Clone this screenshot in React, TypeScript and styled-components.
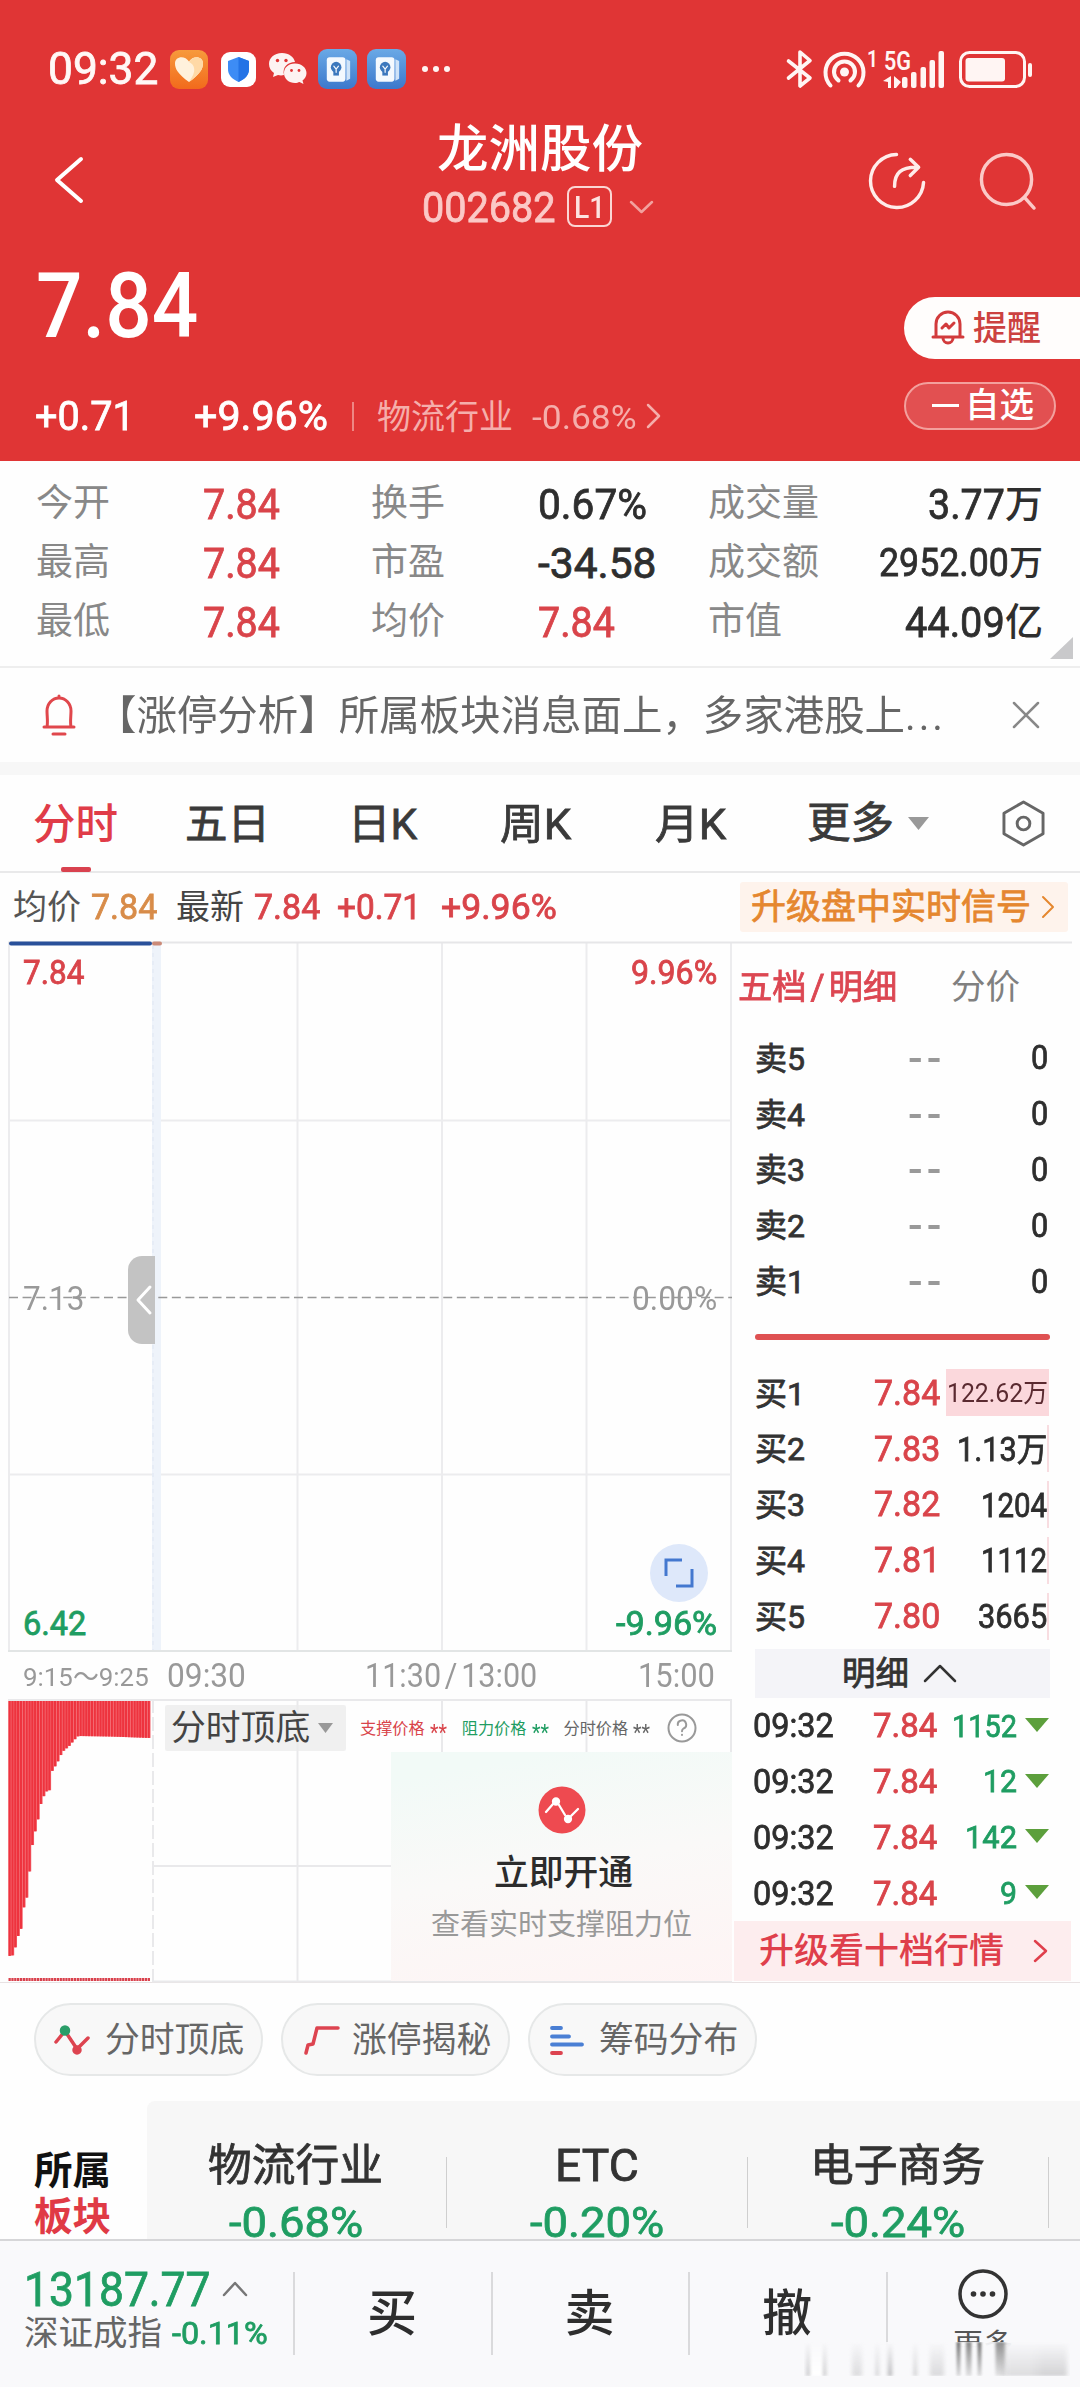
import React, { useLayoutEffect, useRef, useState } from 'react';
import styled, { createGlobalStyle } from 'styled-components';

const Global = createGlobalStyle`
  * { box-sizing: border-box; }
  body { margin: 0; background: #fefefe; }
`;

const RED = '#e03535';
const UP = '#d9444a';
const DOWN = '#1f9d62';

const Page = styled.div`
  width: 1080px;
  height: 2387px;
  overflow: hidden;
  display: flex;
  flex-direction: column;
  background: #fefefe;
  font-family: Roboto, 'Noto Sans CJK SC', sans-serif;
`;

const TextBox = styled.span<{ $w?: number; $ml: number; $size: number; $color: string; $weight: number; $spacing: number }>`
  display: block;
  flex: none;
  width: ${(p) => (p.$w ? `${p.$w}px` : 'auto')};
  margin-left: ${(p) => p.$ml}px;
  padding-top: 2px;
  font-size: ${(p) => p.$size}px;
  letter-spacing: ${(p) => p.$spacing}px;
  line-height: 1.2;
  color: ${(p) => p.$color};
  font-weight: ${(p) => (p.$weight === 450 ? 400 : p.$weight)};
  -webkit-text-stroke: ${(p) => (p.$weight === 450 ? '0.8px currentColor' : '0')};
  white-space: nowrap;
`;

const TextInner = styled.span`
  display: inline-block;
  transform-origin: left center;
`;

const Slash = styled.span`
  margin: 0 4px;
`;

type TextProps = {
  children: React.ReactNode;
  w?: number;
  ml?: number;
  size: number;
  color?: string;
  weight?: number;
  spacing?: number;
};

/* Text condensed or widened to a set advance width. */
function Text({ children, w, ml = 0, size, color = '#333', weight = 400, spacing = 0 }: TextProps) {
  const ref = useRef<HTMLSpanElement>(null);
  const [scale, setScale] = useState(1);
  useLayoutEffect(() => {
    if (w && ref.current) setScale(w / ref.current.offsetWidth);
  }, [w, children]);
  return (
    <TextBox $w={w} $ml={ml} $size={size} $color={color} $weight={weight} $spacing={spacing}>
      <TextInner ref={ref} style={{ transform: `scaleX(${scale})` }}>
        {children}
      </TextInner>
    </TextBox>
  );
}

const Icon = styled.svg<{ $ml?: number }>`
  display: block;
  flex: none;
  margin-left: ${(p) => p.$ml ?? 0}px;
  fill: none;
  overflow: visible;
  stroke-linecap: round;
  stroke-linejoin: round;
`;

/* ---------- header ---------- */

const Header = styled.header`
  height: 461px;
  flex: none;
  background: ${RED};
  display: flex;
  flex-direction: column;
`;

const StatusBar = styled.div`
  height: 114px;
  padding: 24px 48px 0 48px;
  display: flex;
  align-items: center;
  justify-content: space-between;
`;

const Row = styled.div`
  display: flex;
  align-items: center;
`;

const AppBadge = styled.span<{ $ml: number; $w: number; $h: number; $bg: string }>`
  width: ${(p) => p.$w}px;
  height: ${(p) => p.$h}px;
  margin-left: ${(p) => p.$ml}px;
  border-radius: 9px;
  background: ${(p) => p.$bg};
  display: flex;
  align-items: center;
  justify-content: center;
`;

const TitleBar = styled.div`
  height: 126px;
  display: grid;
  grid-template-columns: 300px 480px 300px;
`;

const BackSlot = styled.div`
  padding: 43px 0 0 55px;
`;

const TitleStack = styled.div`
  display: flex;
  flex-direction: column;
  align-items: center;
  padding-top: 3px;
`;

const CodeRow = styled(Row)`
  height: 44px;
  margin-top: 4px;
  margin-left: -5px;
`;

const LevelBadge = styled.span`
  width: 45px;
  height: 41px;
  margin-left: 11px;
  border: 2.5px solid #fbd6d4;
  border-radius: 8px;
  display: flex;
  align-items: center;
  justify-content: center;
`;

const ActionSlot = styled.div`
  display: flex;
  padding: 37px 0 0 88px;
`;

const Quote = styled.div`
  display: flex;
  justify-content: space-between;
  flex: 1;
`;

const QuoteMain = styled.div`
  padding: 11px 0 0 35px;
`;

const PriceLine = styled(Row)`
  height: 110px;
`;

const ChangeLine = styled(Row)`
  height: 60px;
  margin-top: 25px;
`;

const Divider = styled.span<{ $ml: number; $h: number; $color: string }>`
  width: 2px;
  flex: none;
  height: ${(p) => p.$h}px;
  margin-left: ${(p) => p.$ml}px;
  background: ${(p) => p.$color};
`;

const QuoteActions = styled.div`
  width: 176px;
  padding-top: 57px;
`;

const AlertPill = styled(Row)`
  height: 62px;
  background: #fffdfc;
  border-radius: 31px 0 0 31px;
  padding: 0 0 2px 27px;
`;

const WatchPill = styled(Row)`
  width: 152px;
  height: 48px;
  margin-top: 23px;
  padding: 0 0 2px 26px;
  border: 2px solid #f3a09d;
  border-radius: 24px;
  background: #e25051;
`;

const MinusMark = styled.span`
  width: 27px;
  height: 3px;
  background: #fff;
`;

/* ---------- statistics and notice ---------- */

const Stats = styled.section`
  position: relative;
  height: 207px;
  flex: none;
  padding: 13px 0 0 36px;
  border-bottom: 2px solid #eeeeee;
  display: grid;
  grid-template-columns: 167px 168px 167px 170px 112px 223px;
  grid-auto-rows: 59px;
  align-items: center;
`;

const Right = styled.div`
  display: flex;
  justify-content: flex-end;
  align-items: center;
`;

const Corner = styled.span`
  position: absolute;
  right: 7px;
  bottom: 7px;
  border-left: 23px solid transparent;
  border-bottom: 22px solid #c9c9cb;
`;

const Notice = styled(Row)`
  height: 94px;
  flex: none;
  padding-left: 42px;
`;

const Gap = styled.div`
  height: 13px;
  flex: none;
  background: #f7f7f7;
`;

/* ---------- tabs ---------- */

const Tabs = styled.nav`
  height: 98px;
  flex: none;
  display: flex;
  padding-left: 33px;
  border-bottom: 2px solid #e9e9ea;
`;

const Tab = styled.div<{ $w: number }>`
  width: ${(p) => p.$w}px;
  height: 96px;
  display: flex;
  align-items: center;
`;

const ActiveTab = styled.div`
  width: 152px;
  height: 96px;
  padding-top: 22px;
`;

const Underline = styled.div`
  width: 30px;
  height: 5px;
  border-radius: 2px;
  margin: 17px 0 0 28px;
  background: #d9424f;
`;

const InfoRow = styled(Row)`
  height: 69px;
  flex: none;
  padding: 0 0 2px 13px;
`;

const SignalPromo = styled(Row)`
  margin-left: auto;
  margin-right: 12px;
  width: 328px;
  height: 50px;
  padding-left: 11px;
  background: #fef3ec;
  border-radius: 3px;
`;

/* ---------- chart and order book ---------- */

const Market = styled.section`
  height: 1040px;
  flex: none;
  display: grid;
  grid-template-columns: 732px 348px;
`;

const PriceChart = styled.div`
  position: relative;
  height: 709px;
`;

const Plot = styled.svg`
  position: absolute;
  inset: 0;
  width: 100%;
  height: 100%;
  overflow: visible;
`;

const Scale = styled.div`
  height: 709px;
  padding: 10px 15px 7px 23px;
  display: flex;
  flex-direction: column;
  justify-content: space-between;
`;

const ScaleRow = styled.div`
  display: flex;
  justify-content: space-between;
`;

const Handle = styled.div`
  position: absolute;
  left: 128px;
  top: 314px;
  width: 27px;
  height: 88px;
  border-radius: 14px 0 0 14px;
  background: #c3c3c3;
  display: flex;
  align-items: center;
  justify-content: center;
`;

const ExpandButton = styled.div`
  position: absolute;
  left: 650px;
  top: 602px;
  width: 58px;
  height: 58px;
  border-radius: 50%;
  background: #dee8fa;
  display: flex;
  align-items: center;
  justify-content: center;
`;

const Axis = styled(Row)`
  height: 48px;
  padding: 1px 0 0 23px;
`;

const SubChart = styled.div`
  position: relative;
  height: 283px;
  padding-top: 6px;
`;

const Legend = styled(Row)`
  position: relative;
  height: 46px;
  padding-left: 165px;
`;

const Stars = styled.span`
  padding-top: 8px;
`;

const Selector = styled(Row)`
  width: 181px;
  height: 46px;
  padding-left: 6px;
  background: rgba(235, 235, 235, 0.75);
  border-radius: 2px;
`;

const OpenCard = styled.div`
  position: absolute;
  left: 391px;
  top: 53px;
  width: 341px;
  height: 229px;
  padding-top: 34px;
  background: linear-gradient(170deg, #f2faf7 10%, #faf9f8 50%, #fef4f4 100%);
  display: flex;
  flex-direction: column;
  align-items: center;
`;

const OpenTitle = styled.div`
  margin: 17px 0 11px;
`;

const Book = styled.div`
  display: flex;
  flex-direction: column;
`;

const BookTabs = styled(Row)`
  height: 89px;
  padding-left: 6px;
`;

const BookRow = styled.div`
  height: 55.8px;
  margin: 0 31px 0 23px;
  padding-bottom: 2px;
  display: grid;
  grid-template-columns: 119px 66px 109px;
  align-items: center;
`;

const Volume = styled.div<{ $full?: boolean; $edge?: boolean }>`
  height: 47px;
  display: flex;
  align-items: center;
  justify-content: flex-end;
  margin-left: ${(p) => (p.$full ? 6 : 0)}px;
  background: ${(p) => (p.$full ? '#fbd8dc' : 'none')};
  border-right: ${(p) => (p.$edge ? '2px solid #f8dde1' : '1px solid transparent')};
`;

const Balance = styled.div`
  height: 6px;
  margin: 24px 30px 26px 23px;
  border-radius: 3px;
  background: #df5152;
`;

const DetailBar = styled(Row)`
  height: 49px;
  margin: 4px 30px 0 23px;
  padding-left: 87px;
  background: #f4f4f8;
`;

const TradeRow = styled.div`
  height: 55.8px;
  margin: 0 31px 0 21px;
  padding-bottom: 2px;
  display: grid;
  grid-template-columns: 120px 66px 78px 32px;
  align-items: center;
`;

const LevelPromo = styled(Row)`
  height: 60px;
  margin-left: 2px;
  width: 337px;
  padding-left: 25px;
  background: #fdedee;
`;

/* ---------- tools, sectors, bottom bar ---------- */

const Tools = styled.section`
  height: 119px;
  flex: none;
  padding: 20px 0 0 34px;
  border-top: 1px solid #e8e2e3;
  display: flex;
  gap: 18px;
`;

const Tool = styled.div`
  width: 229px;
  height: 73px;
  padding-left: 18px;
  border-radius: 37px;
  border: 2px solid #e6e8e8;
  background: #f8f8f8;
  display: flex;
  align-items: center;
`;

const Sectors = styled.section`
  height: 138px;
  flex: none;
  display: flex;
`;

const SectorTitle = styled.div`
  width: 147px;
  padding: 45px 0 0 34px;
`;

const TightLine = styled.div`
  height: 46px;
`;

const SectorList = styled.div`
  flex: 1;
  display: flex;
  background: #f7f7f7;
  border-radius: 8px 0 0 0;
`;

const Sector = styled.div`
  width: 301px;
  padding: 37px 4px 0 0;
  position: relative;
  display: flex;
  flex-direction: column;
  align-items: center;
  gap: 2px;
  &::after {
    content: '';
    position: absolute;
    right: 1px;
    top: 56px;
    width: 1.5px;
    height: 71px;
    background: #cfcfcf;
  }
`;

const BottomBar = styled.footer`
  height: 148px;
  flex: none;
  border-top: 2px solid #d6d6d8;
  background: #f9f9fb;
  display: grid;
  grid-template-columns: 293px 198px 197px 198px 194px;
`;

const IndexCell = styled.div`
  padding: 18px 0 0 24px;
`;

const IndexName = styled(Row)`
  margin-top: -8px;
`;

const TradeCell = styled.div`
  position: relative;
  display: flex;
  justify-content: center;
  padding-top: 41px;
  &::before {
    content: '';
    position: absolute;
    left: 0;
    top: 31px;
    width: 1.5px;
    height: 83px;
    background: #dadadc;
  }
`;

const MoreCell = styled(TradeCell)`
  flex-direction: column;
  align-items: center;
  justify-content: flex-start;
  gap: 6px;
  padding-top: 28px;
`;

/* The strip below the toolbar icons, with its fading vertical streaks. */
const FadeStrip = styled.div`
  position: absolute;
  left: -90px;
  top: 101px;
  width: 284px;
  height: 45px;
  background: linear-gradient(180deg, rgba(249, 249, 251, 0.9) 0, #f9f9fb 6px);
`;

const Streaks = styled.div`
  width: 266px;
  height: 34px;
  margin: 0 0 0 8px;
  filter: blur(1.5px);
  background: linear-gradient(
    90deg,
    transparent 0, #c4c4c6 5px, #fff 7px 18px, #c4c4c6 20px, transparent 24px 46px, #dcdcde 50px 56px,
    transparent 60px 70px, #d4d4d6 73px, transparent 77px 82px, #b4b4b6 86px, transparent 90px 108px,
    #d0d0d2 111px, transparent 115px 124px, #dadadc 128px 138px, transparent 142px 196px,
    #dcdcde 204px 226px, #d2d2d4 240px 260px, transparent 266px
  );
  mask-image: linear-gradient(180deg, transparent, #000);
`;

const LabelStreaks = styled.div`
  width: 58px;
  height: 34px;
  margin: -34px 0 0 158px;
  filter: blur(1px);
  background: linear-gradient(
    90deg,
    transparent 2px, #777 3px 6px, transparent 7px 11px, #888 13px 17px,
    transparent 18px 23px, #777 24px 27px, transparent 28px 40px, #8f8f8f 43px 49px, transparent 53px
  );
  mask-image: linear-gradient(180deg, #000, rgba(0, 0, 0, 0.2));
`;

const Phone = {
  heart: (
    <Icon width="30" height="28" viewBox="0 0 30 28">
      <path d="M15 27C4 19 1 14 1 8.500C1 1 11 0 15 6.500C19 0 29 1 29 8.500C29 14 26 19 15 27Z" fill="#fff1dc" />
      <path d="M15 7C19 0 29 1 29 8.500C29 14 26 19 15 27C23 16 21 10 15 7Z" fill="#ffd9a6" />
    </Icon>
  ),
  shield: (
    <Icon width="23" height="25" viewBox="0 0 23 25">
      <path d="M11.500 0L22 4V12C22 18 18 22 11.500 25C5 22 1 18 1 12V4Z" fill="#3d8cf5" />
      <path d="M11.500 0L22 4V12C22 18 18 22 11.500 25Z" fill="#2373e6" />
    </Icon>
  ),
  card: (
    <Icon width="28" height="27" viewBox="0 0 30 28">
      <path d="M24 3L28 5V24L24 26" fill="#cfe3f8" />
      <rect x="3" y="1" width="20" height="26" rx="3" fill="#f4f9fe" />
      <circle cx="13" cy="11.500" r="5.700" fill="#3c78bd" />
      <path d="M10 14H16V20.500H10Z" fill="#3c78bd" />
      <path d="M10.500 10.500L13 13.500L15.500 10.500M13 13.500V17" stroke="#f4f9fe" strokeWidth="1.300" />
    </Icon>
  ),
};

const WeChat = () => (
  <Icon $ml={12} width="39" height="34" viewBox="0 0 39 34">
    <path d="M14 1C6 1 1 6 1 12C1 16 3 19 6 21L5 25L10 23C12 23.500 14 23.500 16 23C14 15 20 10 27 10C26 5 21 1 14 1Z" fill="#fdf3f2" />
    <path d="M27 11.500C20 11.500 16 16 16 21C16 27 21 31 27 31C29 31 30 30.500 31.500 30L35.500 32L34.500 28.500C37 27 38.500 24 38.500 21C38.500 16 34 11.500 27 11.500Z" fill="#fdf3f2" />
    <g fill={RED}>
      <circle cx="9.500" cy="8.500" r="1.700" />
      <circle cx="18" cy="8.500" r="1.700" />
      <circle cx="23.500" cy="18.500" r="1.400" />
      <circle cx="31" cy="18.500" r="1.400" />
    </g>
  </Icon>
);

const StatusIcons = () => (
  <Icon width="246" height="40" viewBox="787 48 246 40" stroke="#fff5f3">
    <path d="M789.500 60L811 77L801 85V51L811 59.500L789.500 77" strokeWidth="3.600" />
    <circle cx="845.500" cy="71" r="4.500" fill="#fff5f3" stroke="none" />
    <path d="M839.500 79.500A10.500 10.500 0 1 1 851.500 79.500" strokeWidth="4" />
    <path d="M831.500 84.500A19 19 0 1 1 859.500 84.500" strokeWidth="4" />
    <g fill="#fff5f3" stroke="none">
      <path d="M884 80L892 75V87H889V81ZM895 75L902 81L897 87H895Z" />
      <rect x="903" y="76" width="5.500" height="11" rx="2" />
      <rect x="912" y="71" width="5.500" height="16" rx="2" />
      <rect x="921.500" y="66" width="5.500" height="21" rx="2" />
      <rect x="930.500" y="59" width="5.500" height="28" rx="2" />
      <rect x="939.500" y="50" width="5.500" height="37" rx="2" />
      <rect x="966.500" y="57" width="39.500" height="23.500" rx="3" />
      <rect x="1029" y="62" width="4" height="14" rx="2" />
    </g>
    <rect x="961.500" y="51.500" width="64" height="34" rx="9" strokeWidth="3" />
    <g fill="#fff5f3" stroke="none" fontFamily="Roboto, sans-serif" fontWeight="600">
      <text x="868" y="66" fontSize="23" textLength="11" lengthAdjust="spacingAndGlyphs">1</text>
      <text x="885" y="69" fontSize="25.500" textLength="27" lengthAdjust="spacingAndGlyphs">5G</text>
    </g>
  </Icon>
);

const Chevron = ({ w, h, ml, color, dir, sw = 2.5 }: { w: number; h: number; ml: number; color: string; dir: 'left' | 'right' | 'up' | 'down'; sw?: number }) => {
  const d = {
    left: `M${w - 2} 2L2 ${h / 2}L${w - 2} ${h - 2}`,
    right: `M2 2L${w - 2} ${h / 2}L2 ${h - 2}`,
    up: `M2 ${h - 2}L${w / 2} 2L${w - 2} ${h - 2}`,
    down: `M2 2L${w / 2} ${h - 2}L${w - 2} 2`,
  }[dir];
  return (
    <Icon $ml={ml} width={w} height={h} stroke={color} strokeWidth={sw}>
      <path d={d} />
    </Icon>
  );
};

const Caret = ({ w, h, ml, color }: { w: number; h: number; ml: number; color: string }) => (
  <Icon $ml={ml} width={w} height={h}>
    <path d={`M0 0H${w}L${w / 2} ${h}Z`} fill={color} />
  </Icon>
);

/* Lower envelope of the opening auction volume, as [x, y] points. */
const envelope: [number, number][] = [
  [9, 1956], [14, 1955], [16, 1942], [19, 1933], [22.500, 1925], [23.500, 1908], [27, 1896], [30, 1865],
  [33, 1838], [37, 1825], [40, 1806], [44, 1795], [47, 1790.500], [51, 1790], [52, 1771], [57, 1763],
  [62, 1752], [69, 1746], [74, 1740], [78, 1736], [110, 1736.500], [151, 1738],
];

const envelopeAt = (x: number) => {
  for (let i = 1; i < envelope.length; i++) {
    const [x0, y0] = envelope[i - 1];
    const [x1, y1] = envelope[i];
    if (x <= x1) return y0 + ((x - x0) / (x1 - x0)) * (y1 - y0);
  }
  return 1738;
};

const PITCH = 2.84;
const bars = Array.from({ length: 50 }, (_, i) => {
  const x = 8.5 + i * PITCH;
  return { x, y: envelopeAt(Math.max(x + 1, 9)) };
});

const stats: [string, string, number, string][][] = [
  [['今开', '7.84', 77, UP], ['换手', '0.67%', 109, '#2e2e2e'], ['成交量', '3.77', 77, '#2e2e2e']],
  [['最高', '7.84', 77, UP], ['市盈', '-34.58', 119, '#2e2e2e'], ['成交额', '2952.00', 130, '#2e2e2e']],
  [['最低', '7.84', 77, UP], ['均价', '7.84', 77, UP], ['市值', '44.09', 100, '#2e2e2e']],
];
const units = ['万', '万', '亿'];

const buys: [string, string, string, number, number][] = [
  ['1', '7.84', '122.62万', 101, 26],
  ['2', '7.83', '1.13万', 90, 33],
  ['3', '7.82', '1204', 66, 33],
  ['4', '7.81', '1112', 66, 33],
  ['5', '7.80', '3665', 69, 33],
];

const trades: [string, number][] = [['1152', 65], ['12', 34], ['142', 52], ['9', 17]];

const sectors: [string, number, string][] = [
  ['物流行业', 175, '-0.68%'],
  ['ETC', 84, '-0.20%'],
  ['电子商务', 175, '-0.24%'],
];

export default function App() {
  return (
    <Page>
      <Global />
      <Header>
        <StatusBar>
          <Row>
            <Text size={43.5} w={110} color="#fff8f6" weight={450}>09:32</Text>
            <AppBadge $ml={12} $w={38} $h={39} $bg="linear-gradient(#f79a3c, #f26a1c)">{Phone.heart}</AppBadge>
            <AppBadge $ml={13} $w={35} $h={35} $bg="#fff">{Phone.shield}</AppBadge>
            <WeChat />
            <AppBadge $ml={11} $w={39} $h={40} $bg="linear-gradient(#6aa9e6, #3c78cc)">{Phone.card}</AppBadge>
            <AppBadge $ml={10} $w={39} $h={40} $bg="linear-gradient(#6aa9e6, #3c78cc)">{Phone.card}</AppBadge>
            <Icon $ml={15} width="30" height="8">
              <g fill="#fff5f3"><circle cx="4" cy="4" r="3" /><circle cx="15" cy="4" r="3" /><circle cx="26" cy="4" r="3" /></g>
            </Icon>
          </Row>
          <StatusIcons />
        </StatusBar>
        <TitleBar>
          <BackSlot>
            <Chevron w={28} h={46} ml={0} color="#fff" dir="left" sw={4} />
          </BackSlot>
          <TitleStack>
            <Text size={51.5} color="#fff" weight={500}>龙洲股份</Text>
            <CodeRow>
              <Text size={42} w={134} color="#fbc9c7" weight={450}>002682</Text>
              <LevelBadge><Text size={31} w={31} color="#fde3e1" weight={500}>L1</Text></LevelBadge>
              <Chevron w={25} h={14} ml={17} color="#f2a19e" dir="down" />
            </CodeRow>
          </TitleStack>
          <ActionSlot>
            <Icon width="59" height="59" viewBox="0 0 60 60" stroke="#ffecea" strokeWidth="3.500">
              <path d="M29 3.500A27 27 0 1 0 56.500 32" />
              <path d="M27 36C27 22 34 16.500 49 16.500M43 8.500L51.500 16.500L43 25" />
            </Icon>
            <Icon $ml={51} width="59" height="59" viewBox="0 0 60 60" stroke="#fbc9c7" strokeWidth="3.500">
              <circle cx="29" cy="29" r="25.500" />
              <path d="M47 47L57 58" />
            </Icon>
          </ActionSlot>
        </TitleBar>
        <Quote>
          <QuoteMain>
            <PriceLine><Text size={90} w={162} ml={1} color="#fff" weight={500}>7.84</Text></PriceLine>
            <ChangeLine>
              <Text size={40} w={100} color="#fff" weight={450}>+0.71</Text>
              <Text size={40} w={134} ml={59} color="#fff" weight={450}>+9.96%</Text>
              <Divider $ml={24} $h={29} $color="#ee8784" />
              <Text size={34} ml={23} color="#f5aeab">物流行业</Text>
              <Text size={34} w={105} ml={19} color="#f5aeab">-0.68%</Text>
              <Chevron w={15} h={26} ml={9} color="#f5aeab" dir="right" />
            </ChangeLine>
          </QuoteMain>
          <QuoteActions>
            <AlertPill>
              <Icon width="34" height="36" viewBox="0 0 34 36" stroke="#d23b3c" strokeWidth="3">
                <path d="M2 28H32M5 28V15A12 12 0 0 1 29 15V28M12 29A5 5 0 0 0 22 29M11 19L15 15L18 19L23 14" />
              </Icon>
              <Text size={34} ml={8} color="#cc4140" weight={500}>提醒</Text>
            </AlertPill>
            <WatchPill>
              <MinusMark />
              <Text size={34.5} ml={6} color="#fff" weight={500}>自选</Text>
            </WatchPill>
          </QuoteActions>
        </Quote>
      </Header>

      <Stats>
        {stats.map((line, r) =>
          line.map(([label, value, w, color], c) => (
            <React.Fragment key={label}>
              <Text size={37} color="#888">{label}</Text>
              {c < 2 ? (
                <Text size={42.5} w={w} color={color} weight={450}>{value}</Text>
              ) : (
                <Right>
                  <Text size={r === 1 ? 39 : 42.5} w={w} color={color} weight={450}>{value}</Text>
                  <Text size={r === 1 ? 34 : 38} color={color} weight={500}>{units[r]}</Text>
                </Right>
              )}
            </React.Fragment>
          )),
        )}
        <Corner />
      </Stats>

      <Notice>
        <Icon width="34" height="42" viewBox="0 0 34 42" stroke="#e0474c" strokeWidth="3">
          <path d="M2 33H32M5 33C6 28 5 22 5 17A12 13 0 0 1 29 17C29 22 28 28 29 33M17 4V2M11 40H23" />
        </Icon>
        <Text size={40.5} w={850} ml={20} color="#666">
          【涨停分析】所属板块消息面上，多家港股上<span style={{ letterSpacing: 3 }}>...</span>
        </Text>
        <Icon $ml={66} width="28" height="28" stroke="#888" strokeWidth="2.500">
          <path d="M2 2L26 26M26 2L2 26" />
        </Icon>
      </Notice>
      <Gap />

      <Tabs>
        <ActiveTab>
          <Text size={42.5} color="#e03c48" weight={500}>分时</Text>
          <Underline />
        </ActiveTab>
        <Tab $w={163}><Text size={42.5} color="#3a3a3a" weight={450}>五日</Text></Tab>
        <Tab $w={152}><Text size={42.5} w={69} color="#3a3a3a" weight={450}>日K</Text></Tab>
        <Tab $w={155}><Text size={42.5} w={71} color="#3a3a3a" weight={450}>周K</Text></Tab>
        <Tab $w={152}><Text size={42.5} w={71} color="#3a3a3a" weight={450}>月K</Text></Tab>
        <Tab $w={195}>
          <Text size={43.5} color="#3a3a3a" weight={450}>更多</Text>
          <Caret w={21} h={13} ml={14} color="#999" />
        </Tab>
        <Tab $w={44}>
          <Icon width="43" height="47" viewBox="0 0 44 48" stroke="#666" strokeWidth="3">
            <path d="M22 2L42 13.500V34.500L22 46L2 34.500V13.500Z" />
            <circle cx="22" cy="24" r="6.500" />
          </Icon>
        </Tab>
      </Tabs>

      <InfoRow>
        <Text size={34} color="#555">均价</Text>
        <Text size={35} w={66} ml={10} color="#d88c49" weight={450}>7.84</Text>
        <Text size={34} ml={19} color="#444">最新</Text>
        <Text size={35} w={66} ml={10} color={UP} weight={450}>7.84</Text>
        <Text size={35} w={84} ml={17} color={UP} weight={450}>+0.71</Text>
        <Text size={35} w={116} ml={20} color={UP} weight={450}>+9.96%</Text>
        <SignalPromo>
          <Text size={35} color="#e5872f" weight={450}>升级盘中实时信号</Text>
          <Chevron w={14} h={24} ml={10} color="#e5872f" dir="right" sw={2} />
        </SignalPromo>
      </InfoRow>

      <Market>
        <div>
          <PriceChart>
            <Plot viewBox="0 942 732 709">
              <g stroke="#ececee" strokeWidth="2">
                <path d="M9 942V1651M297.500 942V1651M442 942V1651M586.500 942V1651M731 942V1651" />
                <path d="M9 1120.500H732M9 1474.500H732" />
                <path d="M8 1651H732" stroke="#e2e5e5" />
                <path d="M8 942.500H1072" stroke="#e6e6e8" />
              </g>
              <rect x="152" y="945" width="9" height="705" fill="#eef3fa" />
              <path d="M153 945V1650" stroke="#dfe6f2" strokeWidth="1" strokeDasharray="4 4" />
              <g strokeWidth="4" strokeLinecap="round">
                <path d="M154 943.500H160" stroke="#cb8a78" />
                <path d="M11 943.500H150" stroke="#29509a" />
              </g>
            </Plot>
            <Scale>
              <ScaleRow>
                <Text size={32.5} w={61} color={UP} weight={450}>7.84</Text>
                <Text size={32.5} w={86} color={UP} weight={450}>9.96%</Text>
              </ScaleRow>
              <ScaleRow>
                <Text size={32.5} w={61} color="#999">7.13</Text>
                <Text size={32.5} w={85} color="#999">0.00%</Text>
              </ScaleRow>
              <ScaleRow>
                <Text size={32.5} w={63} color={DOWN} weight={450}>6.42</Text>
                <Text size={32.5} w={101} color={DOWN} weight={450}>-9.96%</Text>
              </ScaleRow>
            </Scale>
            <Plot viewBox="0 942 732 709">
              <path d="M9 1297.500H732" stroke="#999" strokeWidth="1.500" strokeDasharray="9 4.570" />
            </Plot>
            <Handle><Chevron w={16} h={30} ml={4} color="#fff" dir="left" sw={3} /></Handle>
            <ExpandButton>
              <Icon width="30" height="30" stroke="#4478cf" strokeWidth="3">
                <path d="M2 18V2H18M28 11V28H12" strokeLinecap="butt" strokeLinejoin="miter" />
              </Icon>
            </ExpandButton>
          </PriceChart>
          <Axis>
            <Text size={26.500} w={126} color="#999">9:15～9:25</Text>
            <Text size={32.500} w={79} ml={18} color="#999">09:30</Text>
            <Text size={32.500} w={172} ml={119} color="#999">11:30<Slash>/</Slash>13:00</Text>
            <Text size={32.500} w={77} ml={101} color="#999">15:00</Text>
          </Axis>
          <SubChart>
            <Plot viewBox="0 1699 732 283">
              <g stroke="#e9e9eb" strokeWidth="2">
                <path d="M8 1700H732M152 1981.500H732" />
                <path d="M297.500 1699V1982M442 1699V1752M586.500 1699V1752M731 1699V1981M152 1866H391" />
                <path d="M153 1699V1981" strokeDasharray="14 4" />
              </g>
              {bars.map((b) => (
                <g key={b.x}>
                  <rect x={b.x} y="1701" width={PITCH} height={b.y - 1701} fill="#f2626a" />
                  <rect x={b.x} y="1701" width="2.100" height={b.y - 1701} fill="#ee333e" />
                  <rect x={b.x} y="1978" width="2.300" height="3" fill="#d9404c" />
                </g>
              ))}
            </Plot>
            <Legend>
              <Selector>
                <Text size={34.8} color="#444">分时顶底</Text>
                <Caret w={15} h={10} ml={8} color="#999" />
              </Selector>
              <Text size={16.2} ml={14} color={UP}>支撑价格</Text>
              <Stars><Text size={22} w={17} ml={5} color={UP}>**</Text></Stars>
              <Text size={16.2} ml={15} color={DOWN}>阻力价格</Text>
              <Stars><Text size={22} w={17} ml={5} color={DOWN}>**</Text></Stars>
              <Text size={16.2} ml={15} color="#666">分时价格</Text>
              <Stars><Text size={22} w={17} ml={5} color="#666">**</Text></Stars>
              <Icon $ml={17} width="30" height="30" stroke="#999" strokeWidth="2">
                <circle cx="15" cy="15" r="13.500" />
                <path d="M10.800 12A4.200 4.200 0 1 1 16.500 15.500C15.300 16.200 15 16.700 15 18.300M15 21.800V22" />
              </Icon>
            </Legend>
            <OpenCard>
              <Icon width="48" height="48" viewBox="0 0 48 48">
                <circle cx="24" cy="24" r="23.500" fill="#ee4a50" />
                <g stroke="#fff" strokeWidth="2.300">
                  <path d="M8 26L15 18M21 19L27 29M33 30L40 23" />
                  <circle cx="18" cy="15.500" r="3" fill="#fff" />
                  <circle cx="30" cy="33" r="3" fill="#fff" />
                </g>
              </Icon>
              <OpenTitle><Text size={34.8} ml={4} color="#2c2c2c" weight={500}>立即开通</Text></OpenTitle>
              <Text size={29} color="#999">查看实时支撑阻力位</Text>
            </OpenCard>
          </SubChart>
        </div>

        <Book>
          <BookTabs>
            <Text size={34.5} w={159} color="#dc4752" weight={450}>五档<Slash>/</Slash>明细</Text>
            <Text size={34.5} ml={54} color="#808080">分价</Text>
          </BookTabs>
          {['5', '4', '3', '2', '1'].map((n) => (
            <BookRow key={n}>
              <Text size={32} w={50} color="#333" weight={450}>卖{n}</Text>
              <Text size={42} w={38} ml={34} color="#999" weight={500} spacing={4}>--</Text>
              <Volume><Text size={32.5} w={17} color="#2e2e2e" weight={450}>0</Text></Volume>
            </BookRow>
          ))}
          <Balance />
          {buys.map(([n, price, vol, w, size], i) => (
            <BookRow key={n}>
              <Text size={32} w={50} color="#333" weight={450}>买{n}</Text>
              <Text size={35} w={66} color={UP} weight={450}>{price}</Text>
              <Volume $full={i === 0} $edge={i > 0}>
                <Text size={size} w={w} color={i === 0 ? '#5a2a30' : '#2e2e2e'} weight={i === 0 ? 400 : 450}>{vol}</Text>
              </Volume>
            </BookRow>
          ))}
          <DetailBar>
            <Text size={33.500} color="#333" weight={450}>明细</Text>
            <Chevron w={34} h={19} ml={14} color="#333" dir="up" />
          </DetailBar>
          {trades.map(([vol, w]) => (
            <TradeRow key={vol}>
              <Text size={34} w={81} color="#2e2e2e" weight={450}>09:32</Text>
              <Text size={34} w={64} color={UP} weight={450}>7.84</Text>
              <Right><Text size={32} w={w} color={DOWN} weight={450}>{vol}</Text></Right>
              <Caret w={24} h={14} ml={8} color="#5c9f3c" />
            </TradeRow>
          ))}
          <LevelPromo>
            <Text size={35} color="#df3f4b" weight={500}>升级看十档行情</Text>
            <Chevron w={15} h={24} ml={29} color="#df3f4b" dir="right" />
          </LevelPromo>
        </Book>
      </Market>

      <Tools>
        <Tool>
          <Icon width="36" height="32" viewBox="0 0 36 32" stroke="#dd4450" strokeWidth="3.500">
            <path d="M2 18L11 7L23 25L34 14" />
            <circle cx="11" cy="6.500" r="3.500" fill="#2a9d68" stroke="#2a9d68" />
            <circle cx="23" cy="26" r="3" fill="#dd4450" />
          </Icon>
          <Text size={34.8} ml={15} color="#666">分时顶底</Text>
        </Tool>
        <Tool>
          <Icon $ml={3} width="36" height="32" viewBox="0 0 36 32" stroke="#dd4450" strokeWidth="3.500">
            <path d="M2 29L4 21L9 20L13 4H34" />
          </Icon>
          <Text size={34.8} ml={12} color="#666">涨停揭秘</Text>
        </Tool>
        <Tool>
          <Icon $ml={2} width="34" height="32" viewBox="0 0 34 32" stroke="#4a7fd4" strokeWidth="3.800">
            <path d="M2 4H11M2 12.500H19M2 20.500H32" />
            <path d="M2 29H11" stroke="#dd4450" />
          </Icon>
          <Text size={34.8} ml={15} color="#666">筹码分布</Text>
        </Tool>
      </Tools>

      <Sectors>
        <SectorTitle>
          <TightLine><Text size={38.500} color="#111" weight={700}>所属</Text></TightLine>
          <TightLine><Text size={38.500} color="#e03a45" weight={700}>板块</Text></TightLine>
        </SectorTitle>
        <SectorList>
          {sectors.map(([name, w, pct]) => (
            <Sector key={name}>
              <Text size={44} w={w} color="#333" weight={450}>{name}</Text>
              <Text size={43} w={134} color={DOWN} weight={450}>{pct}</Text>
            </Sector>
          ))}
        </SectorList>
      </Sectors>

      <BottomBar>
        <IndexCell>
          <Row>
            <Text size={48} w={187} color={DOWN} weight={450}>13187.77</Text>
            <Chevron w={26} h={16} ml={11} color="#777" dir="up" />
          </Row>
          <IndexName>
            <Text size={34.5} color="#666">深证成指</Text>
            <Text size={32} w={96} ml={10} color={DOWN} weight={450}>-0.11%</Text>
          </IndexName>
        </IndexCell>
        <TradeCell><Text size={50} color="#2e2e2e" weight={500}>买</Text></TradeCell>
        <TradeCell><Text size={50} color="#2e2e2e" weight={500}>卖</Text></TradeCell>
        <TradeCell><Text size={50} color="#2e2e2e" weight={500}>撤</Text></TradeCell>
        <MoreCell>
          <Icon width="50" height="50" stroke="#333" strokeWidth="3.500">
            <circle cx="25" cy="25" r="23" />
            <g fill="#333" stroke="none"><circle cx="15.500" cy="25" r="2.800" /><circle cx="25" cy="25" r="2.800" /><circle cx="34.500" cy="25" r="2.800" /></g>
          </Icon>
          <Text size={30} color="#555">更多</Text>
          <FadeStrip>
            <Streaks />
            <LabelStreaks />
          </FadeStrip>
        </MoreCell>
      </BottomBar>
    </Page>
  );
}
